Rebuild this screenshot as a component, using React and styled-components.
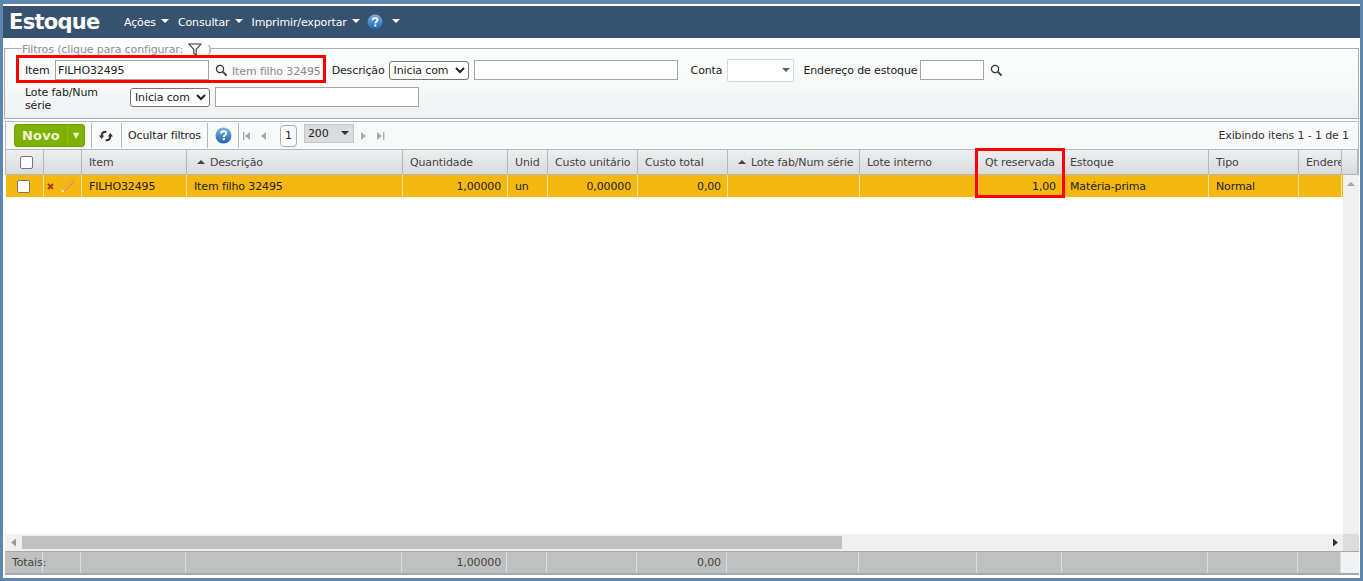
import React from "react";
import styled, { createGlobalStyle } from "styled-components";

const Global = createGlobalStyle`
  html, body { margin: 0; padding: 0; background: #fff; }
  body { font-family: "DejaVu Sans", Verdana, sans-serif; font-size: 11px; color: #222; letter-spacing: -0.13px; }
  * { box-sizing: border-box; }
`;

const Page = styled.div`
  width: 1363px; height: 581px; position: relative; overflow: hidden;
  display: flex; flex-direction: column;
  border: solid #5f86ae; border-width: 4px 3px 3px 3px;
  background: #fff;
  padding: 2px 0 3px 0;
`;
const Header = styled.header`
  height: 32px; flex: none; background: #36526f; color: #fff;
  display: flex; align-items: center; padding-left: 6px; margin: 0 0 2px 0;
`;
const Title = styled.h1`
  margin: 0 24px 0 0; font: bold 21px/32px "DejaVu Sans", sans-serif; color: #fff; width: 91px; letter-spacing: -0.7px; white-space: nowrap;
`;
const Menu = styled.span`
  display: inline-flex; align-items: center; gap: 5px; margin-right: ${p => p.$mr ?? 9}px; font-size: 11px; color: #fff;
`;
const Caret = styled.i`
  display: inline-block; width: 0; height: 0; margin-top: -3px;
  border: 4.5px solid transparent; border-top: 4.5px solid #fff; border-bottom: 0;
`;
const Filters = styled.fieldset`
  margin: 0 1px 2px 1px; padding: 0 0 0 20px; height: 79px; flex: none; min-width: 0;
  border: 1px solid #a9adb3;
  background: linear-gradient(#fbfcfc, #f7f8f8 55%, #eef0f2);
`;
const Legend = styled.legend`
  margin-left: -3px; padding: 3px 0 0 0; font-size: 11px; color: #8b8f94; line-height: 13px; display: flex; align-items: center; gap: 5px; height: 16px;
`;
const FilterRow = styled.div`
  display: flex; align-items: center; height: ${p => p.$h}px; margin-top: ${p => p.$mt || 0}px;
`;
const Label = styled.label`
  font-size: 11px; color: #222; line-height: ${p => p.$lh || 14}px; width: ${p => (p.$w ? p.$w + "px" : "auto")}; margin-left: ${p => p.$ml || 0}px;
  padding-right: ${p => p.$pr || 0}px; padding-top: ${p => p.$pt ?? 2}px; flex: none;
`;
const TextInput = styled.input`
  height: 20px; width: ${p => p.$w}px; margin-left: ${p => p.$ml || 0}px; flex: none; border: 1px solid #a5a5a5; background: #fff; padding: 0 2px;
  font: 11px "DejaVu Sans", sans-serif; letter-spacing: -0.13px; color: #222; outline: none;
`;
const NativeSelect = styled.select`
  height: 19px; width: 80px; margin-left: ${p => p.$ml || 0}px; flex: none; font: 11px "DejaVu Sans", sans-serif; letter-spacing: -0.13px; color: #222;
  background: #fff; border: 1px solid #767676; border-radius: 3px; padding: 0;
`;
const Combo = styled.div`
  width: 67px; height: 23px; margin-left: 5px; flex: none; background: #fff; border: 1px solid #d3d6da; border-radius: 2px;
  display: flex; align-items: center; justify-content: flex-end; padding-right: 3px;
`;
const SmallCaret = styled.i`
  width: 0; height: 0; border: 4px solid transparent; border-top: 4px solid ${p => p.$c || "#555f69"}; border-bottom: 0; display: inline-block;
`;
const Hint = styled.span`
  color: #8a8a8a; font-size: 11px; margin-left: 4px; flex: none; padding-top: 2px;
`;
const Toolbar = styled.div`
  height: 28px; flex: none; margin: 0 1px 0 2px; display: flex; align-items: center; border: 1px solid #b8bcc2; border-width: 1px 1px 0 1px;
  background: #f8f9f9; padding-left: 8px;
`;
const NewButton = styled.button`
  width: 71px; height: 23px; border: 1px solid #6f9c08; border-radius: 3px; background: #7fb100; color: #eef6d6; padding: 0;
  font: bold 13px "DejaVu Sans", sans-serif; display: flex; align-items: center; margin-right: 6px; flex: none;
`;
const NewLabel = styled.span`
  width: 52px; text-align: center; letter-spacing: .2px;
`;
const NewArrow = styled.span`
  flex: 1; height: 100%; display: flex; align-items: center; justify-content: center; border-left: 1px solid #8fbd1b; font-size: 8px;
`;
const Sep = styled.span`
  width: 1px; height: 25px; background: #b4b7bb; flex: none;
`;
const ToolItem = styled.span`
  flex: none; display: flex; align-items: center; padding: ${p => p.$p || "0 6px"}; font-size: 11px; color: #222;
`;
const PageBox = styled.span`
  width: 17px; height: 22px; border: 1px solid #a9adb3; border-radius: 4px; background: #fff; display: flex; align-items: center; justify-content: center; margin: 0 7px 0 9px; flex: none;
`;
const SizeBox = styled.span`
  width: 50px; height: 19px; background: #d9dbdd; border: 1px solid #c2c5c9; display: flex; justify-content: space-between; align-items: center; padding: 0 4px 0 3px; flex: none; margin-top: -5px;
`;
const Info = styled.span`
  margin-left: auto; padding-right: 9px; font-size: 11px; color: #333;
`;
const COLS = "38px 38px 105px 216px 105px 40px 90px 90px 132px 118px 85px 146px 90px 43px 1fr";
const GridRow = styled.div`
  display: grid; grid-template-columns: ${COLS}; flex: none;
`;
const HeadRow = styled(GridRow)`
  margin: 0 1px 0 2px; height: 26px; border: 1px solid #b3b7bd; background: linear-gradient(#eeeff1, #d8dade);
`;
const HeadCell = styled.div`
  display: flex; align-items: center; gap: 5px; justify-content: ${p => (p.$center ? "center" : "flex-start")};
  padding-left: ${p => (p.$center ? 4 : p.$sort ? 10 : 7)}px; overflow: hidden; white-space: nowrap; border-right: 1px solid #b3b7bd;
  font-size: 11px; color: #444;
`;
const UpCaret = styled.i`
  width: 0; height: 0; border: 4px solid transparent; border-bottom: 4px solid #444; border-top: 0; display: inline-block; flex: none;
`;
const Main = styled.div`
  flex: 1; min-height: 0; margin: 0 1px 0 2px; position: relative; display: flex; flex-direction: column; background: #fff;
`;
const DataRow = styled(GridRow)`
  height: 22px; background: #f5b811; width: 1337px; margin-left: 1px;
`;
const Cell = styled.div`
  display: flex; align-items: center; gap: 5px; padding: ${p => (p.$right ? "0 6px 0 7px" : "0 7px")}; justify-content: ${p => (p.$right ? "flex-end" : "flex-start")};
  border-right: 1px solid #fbe6a8; font-size: 11px; color: #222; white-space: nowrap; overflow: hidden;
`;
const CheckCell = styled(Cell)`
  justify-content: center; padding: 0 2px 0 0;
`;
const ActionCell = styled(Cell)`
  padding: 0 0 0 3px; gap: 7px;
`;
const CheckBox = styled.input.attrs({ type: "checkbox" })`
  appearance: none; width: 13px; height: 13px; margin: 0; background: #fff; border: 1px solid #777; border-radius: 2px; flex: none;
`;
const VScroll = styled.div`
  position: absolute; right: 0; top: 0; bottom: 0; width: 16px; background: #f0f0f0; display: flex; justify-content: center; padding-top: 7px;
`;
const ScrollUp = styled.i`
  width: 0; height: 0; border: 4px solid transparent; border-bottom: 4px solid #a3a3a3; border-top: 0; display: block;
`;
const Spacer = styled.div`
  flex: 1;
`;
const HScroll = styled.div`
  height: 17px; flex: none; background: #f0f0f1; display: flex; align-items: center; margin-right: 16px; position: relative; z-index: 1;
`;
const ArrowBtn = styled.span`
  width: 17px; height: 100%; display: flex; align-items: center; justify-content: center; flex: none;
  margin-left: ${p => (p.$end ? "auto" : 0)};
`;
const Thumb = styled.span`
  width: 820px; height: 13px; background: #c1c1c1; flex: none;
`;
const Corner = styled.div`
  position: absolute; right: 0; bottom: 0; width: 16px; height: 17px; background: #dcdcdc; z-index: 2;
`;
const FootRow = styled(GridRow)`
  margin: 0 1px 0 2px; height: 24px; background: #c0c0c0; border-top: 1px solid #a3a9b1; border-bottom: 2px solid #a3a9b1;
`;
const FootCell = styled.div`
  display: flex; align-items: center; justify-content: ${p => (p.$right ? "flex-end" : "flex-start")}; padding: ${p => (p.$right ? "0 5px 0 7px" : "0 7px")};
  border-right: 1px solid #dcdcdc; font-size: 11px; color: #444; white-space: nowrap; ${p => (p.$end ? "background:#f0f1f3;border:0;" : "")}
`;
const RedBox = styled.div`
  position: absolute; border: 3px solid #f00; pointer-events: none; z-index: 5;
  left: ${p => p.$x}px; top: ${p => p.$y}px; width: ${p => p.$w}px; height: ${p => p.$h}px;
`;
const Icon = styled.svg`
  flex: none; display: block; margin-left: ${p => p.$ml || 0}px;
`;

const Search = ({ ml }) => (
  <Icon $ml={ml} width="13" height="13" viewBox="0 0 13 13" fill="none">
    <circle cx="5" cy="5" r="3.6" stroke="#333" strokeWidth="1.2" fill="#f4f8fb" />
    <path d="M7.8 7.8 L11.6 11.6" stroke="#444" strokeWidth="2" />
  </Icon>
);
const Help = ({ size = 16 }) => (
  <Icon width={size} height={size} viewBox="0 0 16 16">
    <defs>
      <linearGradient id="hg" x1="0" y1="0" x2="0" y2="1">
        <stop offset="0" stopColor="#7fb2e6" />
        <stop offset="1" stopColor="#1c62ad" />
      </linearGradient>
    </defs>
    <circle cx="8" cy="8" r="7.5" fill="url(#hg)" />
    <path d="M5.6 6.2 C5.7 4.6 6.8 4 8 4 C9.5 4 10.5 4.9 10.5 6 C10.5 7.6 8.3 7.6 8.3 9.4" fill="none" stroke="#fff" strokeWidth="1.7" />
    <rect x="7.3" y="10.5" width="2" height="2" fill="#fff" />
  </Icon>
);
const Funnel = () => (
  <Icon width="14" height="13" viewBox="0 0 14 13" fill="none">
    <path d="M1 1 H13 L8.2 6.5 V12 L5.8 10.5 V6.5 Z" stroke="#333" strokeWidth="1.1" />
  </Icon>
);
const Refresh = () => (
  <Icon width="14" height="12" viewBox="0 0 14 12" fill="none">
    <path d="M2.6 6 C2.6 3 4.4 1.4 7.4 1.8" stroke="#333" strokeWidth="2" />
    <path d="M0 5.4 H5.2 L2.6 9 Z" fill="#333" />
    <path d="M11.4 6 C11.4 9 9.6 10.6 6.6 10.2" stroke="#333" strokeWidth="2" />
    <path d="M14 6.6 H8.8 L11.4 3 Z" fill="#333" />
  </Icon>
);
const Pager = ({ dir, bar }) => (
  <Icon width="12" height="10" viewBox="0 0 12 10">
    {dir === "l" ? <path d="M9 1 V9 L4 5 Z" fill="#a8acb1" /> : <path d="M3 1 V9 L8 5 Z" fill="#a8acb1" />}
    {bar && <rect x={dir === "l" ? 2 : 9} y="1" width="1.4" height="8" fill="#a8acb1" />}
  </Icon>
);
const Cross = () => (
  <Icon width="7" height="7" viewBox="0 0 7 7">
    <path d="M1 1 L6 6 M6 1 L1 6" stroke="#a83a1e" strokeWidth="1.8" />
  </Icon>
);
const Pencil = () => (
  <Icon width="14" height="14" viewBox="0 0 14 14" fill="none">
    <path d="M2.5 11.5 L12.5 1.5" stroke="#dc8f26" strokeWidth="3" />
    <path d="M2 11.5 L12 1.5" stroke="#fbe6b0" strokeWidth="1" />
    <path d="M0.5 13.5 L3.4 12.6 L1.4 10.6 Z" fill="#fff4d6" />
  </Icon>
);
const Tri = ({ d, c }) => (
  <Icon width="8" height="9" viewBox="0 0 8 9">
    <path d={d === "l" ? "M6 0.5 V8.5 L1 4.5 Z" : "M2 0.5 V8.5 L7 4.5 Z"} fill={c} />
  </Icon>
);

const heads = [
  ["", 0], ["Item", 0], ["Descrição", 1], ["Quantidade", 0], ["Unid", 0], ["Custo unitário", 0], ["Custo total", 0],
  ["Lote fab/Num série", 1], ["Lote interno", 0], ["Qt reservada", 0], ["Estoque", 0], ["Tipo", 0], ["Endereço", 0],
];
const rowCells = [
  ["FILHO32495"], ["Item filho 32495"], ["1,00000", 1], ["un"], ["0,00000", 1], ["0,00", 1], [""], [""], ["1,00", 1], ["Matéria-prima"], ["Normal"], [""],
];
const foot = ["Totais:", "", "", "", "1,00000", "", "", "0,00", "", "", "", "", "", ""];

export default function App() {
  return (
    <Page>
      <Global />
      <Header>
        <Title>Estoque</Title>
        <Menu>Ações <Caret /></Menu>
        <Menu>Consultar <Caret /></Menu>
        <Menu $mr={7}>Imprimir/exportar <Caret /></Menu>
        <Menu><Help /></Menu>
        <Menu><Caret /></Menu>
      </Header>
      <Filters>
        <Legend>Filtros (clique para configurar: <Funnel /> )</Legend>
        <FilterRow $h={24} $mt={2}>
          <Label $w={30}>Item</Label>
          <TextInput $w={154} defaultValue="FILHO32495" />
          <Search ml={6} />
          <Hint>Item filho 32495</Hint>
          <Label $ml={11}>Descrição</Label>
          <NativeSelect $ml={4} defaultValue="Inicia com"><option>Inicia com</option></NativeSelect>
          <TextInput $w={204} $ml={5} />
          <Label $ml={13}>Conta</Label>
          <Combo><SmallCaret /></Combo>
          <Label $ml={9}>Endereço de estoque</Label>
          <TextInput $w={64} $ml={3} />
          <Search ml={6} />
        </FilterRow>
        <FilterRow $h={28} $mt={1}>
          <Label $w={105} $pr={22} $pt={3} $lh={13}>Lote fab/Num série</Label>
          <NativeSelect defaultValue="Inicia com"><option>Inicia com</option></NativeSelect>
          <TextInput $w={204} $ml={5} />
        </FilterRow>
      </Filters>
      <Toolbar>
        <NewButton><NewLabel>Novo</NewLabel><NewArrow>▼</NewArrow></NewButton>
        <Sep />
        <ToolItem $p="0 8px 0 7px"><Refresh /></ToolItem>
        <Sep />
        <ToolItem>Ocultar filtros</ToolItem>
        <Sep />
        <ToolItem $p="0 6px 0 7px"><Help size={17} /></ToolItem>
        <Sep />
        <ToolItem $p="0 2px 0 2px"><Pager dir="l" bar /></ToolItem>
        <ToolItem $p="0 2px"><Pager dir="l" /></ToolItem>
        <PageBox>1</PageBox>
        <SizeBox>200 <SmallCaret $c="#333" /></SizeBox>
        <ToolItem $p="0 2px 0 4px"><Pager dir="r" /></ToolItem>
        <ToolItem $p="0 2px"><Pager dir="r" bar /></ToolItem>
        <Info>Exibindo itens 1 - 1 de 1</Info>
      </Toolbar>
      <HeadRow>
        <HeadCell $center><CheckBox /></HeadCell>
        {heads.map(([t, sort], i) => (
          <HeadCell key={i} $sort={!!sort}>{sort ? <UpCaret /> : null}{t}</HeadCell>
        ))}
        <HeadCell />
      </HeadRow>
      <Main>
        <DataRow>
          <CheckCell><CheckBox /></CheckCell>
          <ActionCell><Cross /><Pencil /></ActionCell>
          {rowCells.map(([t, right], i) => (
            <Cell key={i} $right={!!right}>{t}</Cell>
          ))}
        </DataRow>
        <Spacer />
        <VScroll><ScrollUp /></VScroll>
        <HScroll>
          <ArrowBtn><Tri d="l" c="#9a9a9a" /></ArrowBtn>
          <Thumb />
          <ArrowBtn $end><Tri d="r" c="#333" /></ArrowBtn>
        </HScroll>
        <Corner />
      </Main>
      <FootRow>
        {foot.map((t, i) => (
          <FootCell key={i} $right={i === 4 || i === 7}>{t}</FootCell>
        ))}
        <FootCell $end />
      </FootRow>
      <RedBox $x={13} $y={51} $w={310} $h={28} />
      <RedBox $x={972} $y={144} $w={90} $h={50} />
    </Page>
  );
}
